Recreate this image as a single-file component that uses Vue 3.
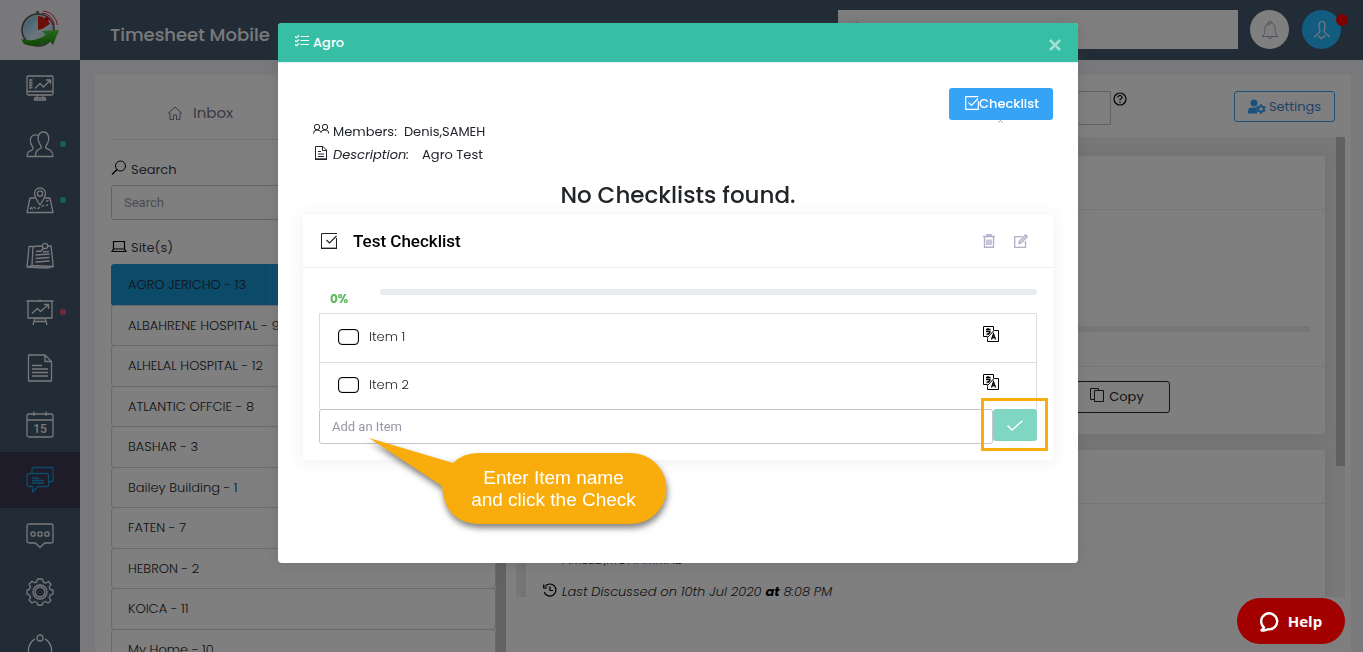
<script setup>
import { ref } from 'vue'

const search = ref('')
const siteSearch = ref('')
const topic = ref('')
const newItem = ref('')

const nav = [
  { id: 'monitor', label: 'Dashboard' },
  { id: 'people', label: 'Employees', dot: 'green' },
  { id: 'map', label: 'Locations', dot: 'green' },
  { id: 'notes', label: 'Notes' },
  { id: 'board', label: 'Reports', dot: 'red' },
  { id: 'document', label: 'Documents' },
  { id: 'calendar', label: 'Calendar' },
  { id: 'chat', label: 'Discussions', active: true },
  { id: 'message', label: 'Messages' },
  { id: 'gear', label: 'Settings' },
  { id: 'network', label: 'Network' },
]

const sites = [
  'AGRO JERICHO - 13',
  'ALBAHRENE HOSPITAL - 9',
  'ALHELAL HOSPITAL - 12',
  'ATLANTIC OFFCIE - 8',
  'BASHAR - 3',
  'Bailey Building - 1',
  'FATEN - 7',
  'HEBRON - 2',
  'KOICA - 11',
  'My Home - 10',
]

const items = ref([
  { name: 'Item 1', done: false },
  { name: 'Item 2', done: false },
])
</script>

<template>
  <div class="shell">
    <aside class="sidebar">
      <a class="brand" href="#" aria-label="Home">
        <svg width="40" height="40" viewBox="0 0 40 40">
          <defs>
            <linearGradient id="face" x1="0" y1="0" x2="1" y2="1">
              <stop offset="0" stop-color="#5fb4dc" />
              <stop offset="0.55" stop-color="#d9eef8" />
              <stop offset="1" stop-color="#6fb7d8" />
            </linearGradient>
            <linearGradient id="arrow" x1="0" y1="0" x2="0" y2="1">
              <stop offset="0" stop-color="#52d038" />
              <stop offset="1" stop-color="#1f8a10" />
            </linearGradient>
          </defs>
          <rect x="16" y="1" width="3" height="3" fill="#777" />
          <circle cx="18" cy="20" r="16" fill="url(#face)" stroke="#555" stroke-width="1.600" />
          <circle cx="18" cy="20" r="14.500" fill="none" stroke="#cfcfcf" />
          <path d="M18 20V6A14 14 0 0 1 30 14L22 19Z" fill="#d8200e" />
          <g fill="none" stroke="#d8305a" stroke-width="1">
            <path d="M22 3Q32 4 34.500 15M23 1Q35 2 37.500 15M26 6Q31 8 32 13" />
          </g>
          <circle cx="27" cy="9" r="2" fill="#c8001c" />
          <path d="M1 29Q14 33 26 25L22 21L39 20L33 35L30 31Q16 39 4 34Z" fill="url(#arrow)" />
        </svg>
      </a>
      <nav>
        <a
          v-for="n in nav"
          :key="n.id"
          href="#"
          class="nav-item"
          :class="{ active: n.active }"
          :aria-label="n.label"
        >
          <svg width="28" height="28" viewBox="0 0 28 28" fill="none" stroke="currentColor" stroke-width="1.3" stroke-linejoin="round">
            <g v-if="n.id === 'monitor'">
              <rect x="1" y="2" width="26" height="19" rx="1.5" />
              <path d="M1 17.500H27M11 21v3M17 21v3M8.500 24h11v2h-11ZM4 5v10M4 6h2.500M4 8.500h2.500M4 11h2.500M4 13.500h2.500M9 14.500L14 9.500L17.500 13L24 6.500M20 6h4.500v4" />
            </g>
            <g v-else-if="n.id === 'people'">
              <path d="M9.500 26.500H27C27 21 24 20 20.500 18.500C19.500 18 19.500 17 20 16C22.500 12.500 23 9 22.500 6.500C21.800 3.500 20 2 17.500 2S13 3.500 12.300 6.500C11.800 9 12.500 12.500 15 16C15.500 17 15.500 18 14.500 18.500C11 20 9.500 21 9.500 26.500Z" />
              <path d="M12 5.500C10.500 4.500 7 4.500 5.300 7C3.500 10.500 4.500 14 7 17.500C7.300 18.500 7 19.500 6 20C3 21.500 1 22 1 26.500H9.500" />
            </g>
            <g v-else-if="n.id === 'map'">
              <path d="M9 12H4L1 26.500H27L24 12H19" />
              <path d="M14 19C10 13 8.500 10.500 8.500 7.500a5.500 5.500 0 0 1 11 0C19.500 10.500 18 13 14 19Z" />
              <circle cx="14" cy="7.500" r="2.700" />
              <path d="M4 23.500c1-3 3-3 5-1.500s4 0 6-1.500s5 0 7-2M20 15.500l4-2M5 21l2 3" stroke-dasharray="3 1.500" />
            </g>
            <g v-else-if="n.id === 'notes'">
              <path d="M7 4.500H3L1 25L21 26L27.300 24.500L25 4H22M7 4.500L6 23.500L1 25M6 23.500L27 24.500M7 4.500L17 4" />
              <path d="M10 9.500l5-.500M17 10l6-.500M9.500 13l14-1M9.500 16.500l14-1M9.500 20l14-1" />
              <circle cx="19" cy="4" r="2.700" />
              <path d="M17.500 6l-2.500 3.500" />
            </g>
            <g v-else-if="n.id === 'board'">
              <path d="M.500 3H27.500M14 3V1.500M2 3V20H26V3M9 20L7 27M19 20L21 27M10 20.500h8M8.500 23.500h11M6 15.500L11.500 10.500L14.500 13.500L22 7M18 6.500h4.500v4.500" />
            </g>
            <g v-else-if="n.id === 'document'">
              <path d="M2.500 1H19L25.500 7.500V27H2.500ZM19 1V7.500H25.500M6 11.500h10M6 15h16M6 18.500h16M6 22h16" />
            </g>
            <g v-else-if="n.id === 'calendar'">
              <rect x="1" y="4" width="26" height="23" rx="2" />
              <path d="M1 10H27M8 1.500V6M20 1.500V6" />
              <text x="14" y="23" class="day">15</text>
            </g>
            <g v-else-if="n.id === 'chat'">
              <path d="M6 7.500V3a1.500 1.500 0 0 1 1.500-1.500H25.500A1.500 1.500 0 0 1 27 3V14a1.500 1.500 0 0 1-1.500 1.500H22.500" />
              <path d="M2.500 7.500H21A1.500 1.500 0 0 1 22.500 9V19A1.500 1.500 0 0 1 21 20.500H12L6.500 26V20.500H2.500A1.500 1.500 0 0 1 1 19V9A1.500 1.500 0 0 1 2.500 7.500ZM6 12h7M6 14.500h12M6 17h12" />
            </g>
            <g v-else-if="n.id === 'message'">
              <path d="M3 2H25A2 2 0 0 1 27 4V19A2 2 0 0 1 25 21H18.500L14 25.500L9.500 21H3A2 2 0 0 1 1 19V4A2 2 0 0 1 3 2Z" />
              <circle cx="7" cy="12" r="2.200" /><circle cx="14" cy="12" r="2.200" /><circle cx="21" cy="12" r="2.200" />
            </g>
            <g v-else-if="n.id === 'gear'">
              <path d="M11.500 1h5l.800 3.200 2.200 1L22.500 3.500 25 6.500 23.200 9.200l1 2.300 2.800.700v4l-2.800 1-1 2.300L25 22.500 22 25 19.300 23.500l-2.300 1-.700 2.500h-4.600l-.700-2.500-2.300-1L6 25 3 22l1.500-2.700-1-2.300L1 16.200v-4l2.500-.900 1-2.200L3 6.200 6 3.200l2.700 1.500 2.100-.900Z" />
              <circle cx="14" cy="14" r="7" /><circle cx="14" cy="14" r="5" />
            </g>
            <g v-else>
              <circle cx="14" cy="4" r="3" />
              <path d="M19 5A12.500 12.500 0 0 1 24.500 21M9 5A12.500 12.500 0 0 0 3.500 21" />
            </g>
          </svg>
          <span v-if="n.dot" class="dot" :class="n.dot"></span>
        </a>
      </nav>
    </aside>

    <div class="main">
      <header class="topbar">
        <h1>Timesheet Mobile</h1>
        <div class="top-tools">
          <label class="top-search">
            <svg width="15" height="15" viewBox="0 0 15 15" fill="none" stroke="#777"><circle cx="7" cy="6.500" r="5.500" /><path d="M11 10.500l3 3.500" /></svg>
            <input v-model="search" type="text" placeholder="Enter search text here" aria-label="Search everything" />
          </label>
          <button class="round bell" aria-label="Notifications">
            <svg width="18" height="20" viewBox="0 0 18 20" fill="none" stroke="#a7abc3"><path d="M7 3a2 2 0 0 1 4 0M1 16.500C4 15 3.500 11 4 8Q4.500 3 9 3T14 8C14.500 11 14 15 17 16.500ZM7 17a2 1.500 0 0 0 4 0M6 6q1-1.500 3-1.500" /></svg>
          </button>
          <button class="round user" aria-label="Profile">
            <svg width="18" height="20" viewBox="0 0 18 20" fill="none" stroke="#f0f2f8" stroke-width="1.200"><path d="M1.500 17.500C2 14.500 6.500 14 7 11C7 10 6 9 6 6C6 3 7 1.500 9 1.500S12 3 12 6C12 9 11 10 11 11C11.500 14 16 14.500 16.500 17.500M5 15.500L8 18.500L12.500 15.500" /></svg>
            <span class="alert"></span>
          </button>
        </div>
      </header>

      <div class="page">
        <section class="sites">
          <div class="tab">
            <svg width="16" height="16" viewBox="0 0 16 16" fill="none" stroke="#73758a"><path d="M1 8.500L8 2L15 8.500M3 7.500V14.500H6.500V10H9.500V14.500H13V7.500" /></svg>
            <span>Inbox</span>
          </div>
          <label class="field-label" for="site-search">
            <svg width="16" height="16" viewBox="0 0 16 16" fill="none" stroke="#000"><circle cx="9.500" cy="6" r="5" /><path d="M6 9.500L1 14.500" stroke-width="1.400" /></svg>
            Search
          </label>
          <input id="site-search" v-model="siteSearch" class="text-field" type="text" placeholder="Search" />
          <p class="field-label second">
            <svg width="16" height="16" viewBox="0 0 16 16" fill="none" stroke="#000" stroke-width="1.200"><path d="M2.500 3.500H13.500V11H2.500ZM1 13.500H15L13.500 11H2.500Z" /></svg>
            Site(s)
          </p>
          <div class="site-wrap">
            <div class="site-list">
              <a v-for="(s, i) in sites" :key="s" href="#" class="site" :class="{ chosen: i === 0 }">{{ s }}</a>
            </div>
            <div class="site-scroll"></div>
          </div>
        </section>

        <section class="talks">
          <div class="talk-bar">
            <input v-model="topic" class="topic" type="text" aria-label="Topic" />
            <svg class="hint" width="14" height="14" viewBox="0 0 14 14" fill="none" stroke="#000" stroke-width="1.200"><circle cx="7" cy="7" r="6" /><path d="M5 5.500Q5 3.500 7 3.500T9 5.500Q9 6.500 7 7.500V8.500M7 9.700V11" /></svg>
            <button class="settings">
              <svg width="18" height="15" viewBox="0 0 18 15" fill="#36a3f7"><circle cx="6" cy="4" r="3.500" /><path d="M0 14.500V12Q0 8.500 4 8.500H9V14.500Z" /><circle cx="13" cy="10" r="2.800" fill="none" stroke="#36a3f7" stroke-width="2" /><path d="M12.200 5h1.600v2h-1.600ZM12.200 13h1.600v2h-1.600ZM8.200 8l.800-1.300 1.600 1-.800 1.300ZM15.500 11.800l.800-1.300 1.700 1-.800 1.300ZM18 8.300l-.800-1.300-1.600 1 .8 1.300ZM8.200 12l.800 1.300 1.600-1-.8-1.300Z" /></svg>
              Settings
            </button>
          </div>
          <div class="scroller">
            <div class="cards">
              <article class="card">
                <div class="card-head"></div>
                <div class="card-body"><div class="meter"></div></div>
                <div class="card-foot">
                  <button class="copy">
                    <svg width="14" height="14" viewBox="0 0 14 14" fill="none" stroke="#212529"><path d="M4.500 11.500H.500V.500H8.500V2.500M4.500 2.500H13.500V13.500H4.500Z" /></svg>
                    Copy
                  </button>
                </div>
              </article>
              <article class="card">
                <div class="card-head"></div>
                <p class="talk-people">AMEED,MOHAMMAD</p>
              </article>
            </div>
            <div class="rail"><div class="thumb"></div></div>
          </div>
          <p class="last">
            <svg width="14" height="14" viewBox="0 0 14 14" fill="none" stroke="#000" stroke-width="1.200"><path d="M2 3.500A6 6 0 1 1 1.200 9M.700 1.500V5H4.200M7 3.500V7.500H10" /></svg>
            <em>Last Discussed on 10th Jul 2020 <b>at</b> 8:08 PM</em>
          </p>
        </section>
      </div>
    </div>

    <div class="backdrop">
      <div class="modal" role="dialog" aria-labelledby="modal-title">
        <header class="modal-head">
          <svg width="14" height="12" viewBox="0 0 14 12" fill="none" stroke="#fff"><path d="M5.500 1.500H14M5.500 5.500H14M5.500 9.500H14" /><path d="M0 1.500l1.200 1.200L4 .500M0 5.500l1.200 1.200L4 4.500M0 9.500l1.200 1.200L4 8.500" stroke-width="1.200" /></svg>
          <h2 id="modal-title">Agro</h2>
          <button class="close" aria-label="Close">
            <svg width="12" height="12" viewBox="0 0 12 12" stroke="#a5dfd3" stroke-width="2.600"><path d="M1 1L11 11M11 1L1 11" /></svg>
          </button>
        </header>
        <div class="modal-body">
          <div class="actions">
            <button class="checklist-btn">
              <svg width="14" height="14" viewBox="0 0 14 14" fill="none" stroke="#fff" stroke-width="1.200"><path d="M13.300 5V13.300H.700V.700H13.300M3.500 6.500L6.500 9.500L13 2.500" /></svg>Checklist
            </button>
            <svg class="caret" width="5" height="3" viewBox="0 0 5 3" fill="none" stroke="#999"><path d="M.500 2.500L2.500 .500L4.500 2.500" /></svg>
          </div>
          <div class="facts">
            <p>
              <svg width="16" height="14" viewBox="0 0 16 14" fill="none" stroke="#212529"><circle cx="4" cy="4" r="2.700" /><circle cx="12" cy="4" r="2.700" /><path d="M.500 10.500Q.500 7 4 7T8 9.500Q8 7 12 7T15.500 10.500" /></svg>
              <span>Members:</span><span class="members">Denis,SAMEH</span>
            </p>
            <p>
              <svg width="16" height="14" viewBox="0 0 16 14" fill="none" stroke="#212529"><path d="M2.500 .500H10L13.500 4V13H2.500ZM9.500 .500V4.500H13.500M5 5.500h3M5 8h6M5 10.500h6" /><path d="M2 13.300H14" stroke-width="1.400" /></svg>
              <em>Description:</em><span class="about">Agro Test</span>
            </p>
          </div>
          <h3>No Checklists found.</h3>

          <section class="checklist">
            <header class="checklist-head">
              <svg width="17" height="16" viewBox="0 0 17 16" fill="none" stroke="#222"><path d="M15.500 5V15.500M.500 15V.500H16" /><path d="M0 15.300H16" stroke-width="1.400" /><path d="M5.500 7L8.500 10L15.500 3" stroke-width="1.200" /></svg>
              <h4>Test Checklist</h4>
              <button class="tool" aria-label="Delete checklist">
                <svg width="12" height="14" viewBox="0 0 12 14" fill="none" stroke="#b0b0cc" stroke-width="1.400"><path d="M0 2.500H12M4 2V.800H8V2M1.500 3V13.200H10.500V3M4 5.500v5.500M6 5.500v5.500M8 5.500v5.500" /></svg>
              </button>
              <button class="tool" aria-label="Edit checklist">
                <svg width="14" height="14" viewBox="0 0 14 14" fill="none" stroke="#b0b0cc" stroke-width="1.300"><path d="M8 2.700H.700V13.300H11.500V7" /><path d="M5 9.500L5.500 7L11.500 1L13.300 2.500L7.500 8.700Z" fill="#dcdce9" /></svg>
              </button>
            </header>
            <div class="checklist-body">
              <div class="progress"><b>0%</b><div class="track"></div></div>
              <ul class="items">
                <li v-for="item in items" :key="item.name">
                  <label><input v-model="item.done" type="checkbox" />{{ item.name }}</label>
                  <button class="translate" :aria-label="'Translate ' + item.name">
                    <svg width="16" height="16" viewBox="0 0 16 16" fill="none" stroke="#000"><path d="M4.500 10.500H.500V.500H10.500V4.500M11.500 4.500H15.500V15.500H4.500V12.500M11.500 4L4 12" /><path d="M3 3.500H7.500M5 2V3.500M3 5.500H7Q7 8 3.500 8.500M8.500 13.500L10.500 8L12.500 13.500M9 11.500H12" stroke-width="1.300" /></svg>
                  </button>
                </li>
              </ul>
              <div class="add">
                <input v-model="newItem" class="text-field" type="text" placeholder="Add an Item" aria-label="Add an Item" />
                <div class="confirm-wrap">
                  <button class="confirm" aria-label="Add">
                    <svg width="16" height="11" viewBox="0 0 16 11" fill="none" stroke="#fff" stroke-width="1.500"><path d="M.500 5.500L5 10L15.500 .700" /></svg>
                  </button>
                  <span class="highlight"></span>
                </div>
                <div class="callout">
                  <svg width="310" height="100" viewBox="0 0 310 100"><path d="M0 0L84 25Q94 15 109 15H262A35.500 35.500 0 0 1 262 86H109Q75 84 73 48Z" fill="#f8ad0c" /></svg>
                  <p>Enter Item name<br />and click the Check</p>
                </div>
              </div>
            </div>
          </section>
        </div>
      </div>
    </div>

    <button class="help">
      <svg width="20" height="21" viewBox="0 0 20 21" fill="none" stroke="#fff" stroke-width="2.400"><path d="M4 16.500A8 8 0 1 1 8 18.300Q5 20 1.500 19.300Q3.500 18 4 16.500Z" stroke-linejoin="round" /></svg>
      Help
    </button>
  </div>
</template>

<style>
body {
  margin: 0;
  overflow: hidden;
}
</style>

<style scoped>
* {
  box-sizing: border-box;
}
.shell {
  display: grid;
  grid-template-columns: 80px 1fr;
  height: 100vh;
  overflow: hidden;
  background: #f2f3f8;
  color: #212529;
  font-family: Poppins, Inter, "Open Sans", sans-serif;
  font-size: 13px;
  line-height: 1.5;
}
h1, h2, h3, h4, p, ul {
  margin: 0;
  padding: 0;
  font-weight: 400;
}
a {
  color: inherit;
  text-decoration: none;
}
button {
  border: 0;
  padding: 0;
  background: none;
  font: inherit;
  color: inherit;
  display: flex;
  align-items: center;
  justify-content: center;
}
svg {
  flex: none;
}
input {
  font: 13px Roboto, sans-serif;
}
input::placeholder {
  color: #9699a5;
  opacity: 1;
}

.sidebar {
  background: #42586d;
  overflow: hidden;
  color: #f2f3f8;
}
.brand {
  height: 60px;
  background: #f0f1f7;
  display: flex;
  align-items: center;
  justify-content: center;
}
.nav-item {
  position: relative;
  height: 56px;
  display: flex;
  align-items: center;
  justify-content: center;
}
.nav-item.active {
  background: #3c3952;
  color: #1f95d0;
}
.day {
  font: 500 12px Roboto, sans-serif;
  fill: currentColor;
  stroke: none;
  text-anchor: middle;
}
.dot {
  position: absolute;
  left: 60px;
  top: 25px;
  width: 6px;
  height: 6px;
  border-radius: 50%;
}
.dot.green {
  background: #34bfa3;
}
.dot.red {
  background: #f4516c;
}

.main {
  min-width: 0;
  display: flex;
  flex-direction: column;
}
.topbar {
  height: 60px;
  flex: none;
  background: #42586d;
  display: flex;
  align-items: center;
  justify-content: space-between;
  padding: 0 22px 1px 30px;
}
.topbar h1 {
  padding-top: 10px;
  font-size: 18px;
  font-weight: 500;
  color: #f2f3f8;
}
.top-tools {
  display: flex;
  align-items: center;
  gap: 12px;
}
.top-search {
  width: 400px;
  height: 39px;
  background: #fff;
  display: flex;
  align-items: center;
  gap: 12px;
  padding: 0 12px;
}
.top-search input {
  flex: 1;
  border: 0;
  background: none;
}
.round {
  position: relative;
  width: 39px;
  height: 39px;
  border-radius: 50%;
}
.bell {
  background: #fff;
}
.user {
  background: #22b9ff;
  margin-left: 1px;
}
.alert {
  position: absolute;
  right: -7px;
  top: 4px;
  width: 12px;
  height: 12px;
  border-radius: 50%;
  background: #f00;
}

.page {
  flex: 1;
  min-height: 0;
  margin: 15px 12px 0 15px;
  background: #fff;
  display: flex;
  gap: 10px;
  overflow: hidden;
}
.sites {
  width: 411px;
  padding-left: 16px;
}
.tab {
  height: 65px;
  margin-right: 10px;
  border-bottom: 1px solid #e4e5ea;
  display: flex;
  align-items: center;
  gap: 10px;
  padding: 12px 0 0 56px;
  font-size: 15px;
  color: #73758a;
}
.field-label {
  display: flex;
  align-items: center;
  gap: 4px;
  height: 20px;
  margin-top: 20px;
  color: #3c3e48;
}
.field-label svg {
  margin-top: -4px;
}
.field-label.second {
  margin-top: 18px;
}
.text-field {
  height: 35px;
  border: 1px solid #c4c5ca;
  border-radius: 3px;
  padding: 0 12px 1px;
  background: #fff;
}
.sites .text-field {
  display: block;
  width: 385px;
  margin-top: 5px;
}
.site-wrap {
  display: flex;
  margin-top: 6px;
}
.site-list {
  flex: 1;
}
.site {
  display: block;
  padding: 10px 16px;
  border: 1px solid #d2d3d9;
  border-radius: 3px;
  color: #212529;
  font-weight: 300;
  margin-top: -1px;
}
.site.chosen {
  margin-top: 0;
  background: #1994d4;
  border-color: #1994d4;
}
.site-scroll {
  width: 10px;
  background: #c4c4c4;
}

.talks {
  flex: 1;
  min-width: 0;
  padding-right: 6px;
}
.talk-bar {
  height: 62px;
  display: flex;
  align-items: flex-start;
  padding: 16px 10px 0 26px;
}
.topic {
  width: 569px;
  height: 34px;
  border: 1px solid #c4c5ca;
}
.hint {
  margin: 1px 0 0 2px;
}
.settings {
  margin-left: auto;
  width: 101px;
  height: 31px;
  gap: 3px;
  border: 1px solid #36a3f7;
  border-radius: 3px;
  color: #3f83cf;
}
.scroller {
  height: 460px;
  background: #f0f0f0;
  display: flex;
  overflow: hidden;
}
.cards {
  flex: 1;
  padding: 19px 11px 0 10px;
  display: flex;
  flex-direction: column;
  gap: 16px;
}
.card {
  flex: none;
  background: #fff;
  box-shadow: 0 1px 15px 1px rgba(69, 65, 78, 0.08);
}
.card + .card {
  min-height: 200px;
}
.card-head {
  height: 54px;
  border-bottom: 1px solid #ebedf2;
}
.card-body {
  height: 156px;
  padding: 116px 15px 0;
}
.meter {
  height: 6px;
  border-radius: 3px;
  background: #e9ecef;
}
.card-foot {
  border-top: 1px solid #ebedf2;
  padding: 14px 0 21px 464px;
}
.copy {
  width: 180px;
  height: 32px;
  padding-left: 74px;
  gap: 5px;
  border: 1px solid #212529;
  border-radius: 3px;
}
.copy svg {
  margin-top: -4px;
}
.talk-people {
  padding: 46px 0 0 36px;
  font-weight: 300;
}
.rail {
  width: 9px;
  background: #f0f0f0;
}
.thumb {
  height: 329px;
  background: #c1c1c1;
}
.last {
  position: relative;
  margin-top: -16px;
  padding-left: 27px;
  height: 21px;
  display: flex;
  align-items: center;
  gap: 5px;
  font-weight: 300;
}
.last svg {
  margin-top: -4px;
}
.last b {
  font-weight: 700;
  color: #000;
}

.backdrop {
  position: fixed;
  inset: 0;
  background: rgba(0, 0, 0, 0.5);
  padding: 23px 7px 0 0;
  display: flex;
  align-items: flex-start;
  justify-content: center;
}
.modal {
  width: 800px;
  min-height: 540px;
  background: #fff;
  border-radius: 4px;
  box-shadow: 0 0 15px 1px rgba(69, 65, 78, 0.2);
}
.modal-head {
  height: 39px;
  display: flex;
  align-items: center;
  gap: 4px;
  padding: 0 17px;
  border-radius: 4px 4px 0 0;
  background: #36bfa4;
  color: #fff;
}
.modal-head > svg {
  margin-top: -3px;
}
.modal-head h2 {
  font-size: 13px;
  font-weight: 500;
}
.close {
  margin: 4px 0 0 auto;
}
.modal-body {
  border-top: 1px solid #ebedf2;
  padding: 25px 25px 0;
}
.actions {
  display: flex;
  flex-direction: column;
  align-items: flex-end;
}
.checklist-btn {
  width: 104px;
  height: 32px;
  padding-left: 2px;
  border-radius: 3px;
  background: #36a3f7;
  color: #fff;
  font-weight: 500;
}
.checklist-btn svg {
  margin-top: -2px;
}
.caret {
  margin-right: 50px;
}
.facts {
  padding-left: 10px;
  margin-top: -3px;
}
.facts p {
  height: 23px;
  display: flex;
  align-items: center;
}
.facts svg {
  margin: -4px 4px 0 0;
}
.members {
  margin-left: 7px;
}
.about {
  margin-left: 13px;
}
h3 {
  height: 49px;
  padding-top: 12px;
  text-align: center;
  font-size: 23px;
  font-weight: 500;
}
.checklist {
  background: #fff;
  box-shadow: 0 1px 15px 1px rgba(69, 65, 78, 0.08);
}
.checklist-head {
  height: 53px;
  border-bottom: 1px solid #ebedf2;
  display: flex;
  align-items: center;
  padding: 0 25px 0 18px;
}
.checklist-head h4 {
  flex: 1;
  margin-left: 15px;
  font: 500 17px/24px Roboto, sans-serif;
  color: #000;
}
.tool + .tool {
  margin-left: 19px;
}
.checklist-body {
  padding: 21px 16px 16px;
}
.progress {
  display: flex;
  height: 24px;
}
.progress b {
  width: 61px;
  padding: 1px 0 0 11px;
  font-size: 12px;
  color: #5cb85c;
}
.track {
  flex: 1;
  height: 6px;
  border-radius: 3px;
  background: #e9ecef;
}
.items {
  list-style: none;
  border: 1px solid #dcdde0;
  border-bottom: 0;
}
.items li {
  height: 48px;
  display: flex;
  align-items: center;
  justify-content: space-between;
  padding: 0 37px 2px 18px;
}
.items li + li {
  height: 47px;
  border-top: 1px solid #dcdde0;
}
.items label {
  display: flex;
  align-items: center;
  gap: 10px;
  font-weight: 300;
}
.items input {
  appearance: none;
  margin: 0;
  width: 21px;
  height: 16px;
  border: 1px solid #000;
  border-radius: 4px;
  box-shadow: inset 0 0 1px #000;
}
.translate {
  margin-top: -6px;
}
.add {
  position: relative;
  display: flex;
}
.add .text-field {
  flex: 1;
}
.confirm-wrap {
  position: relative;
}
.confirm {
  width: 44px;
  height: 32px;
  border-radius: 3px;
  background: #7ed6c3;
}
.highlight {
  position: absolute;
  inset: -11px -11px -7px -12px;
  border: 3px solid #f8ad0c;
}
.callout {
  position: absolute;
  left: 50px;
  top: 29px;
  filter: drop-shadow(1px 4px 3px rgba(0, 0, 0, 0.5));
}
.callout p {
  position: absolute;
  left: 72px;
  top: 29px;
  width: 225px;
  text-align: center;
  color: #fff;
  font: 19px/22px "Liberation Sans", Arial, sans-serif;
}

.help {
  position: fixed;
  right: 18px;
  bottom: 8px;
  width: 108px;
  height: 46px;
  gap: 8px;
  border-radius: 23px;
  background: #a30000;
  color: #fff;
  font: 700 15px "Open Sans", sans-serif;
}
</style>
